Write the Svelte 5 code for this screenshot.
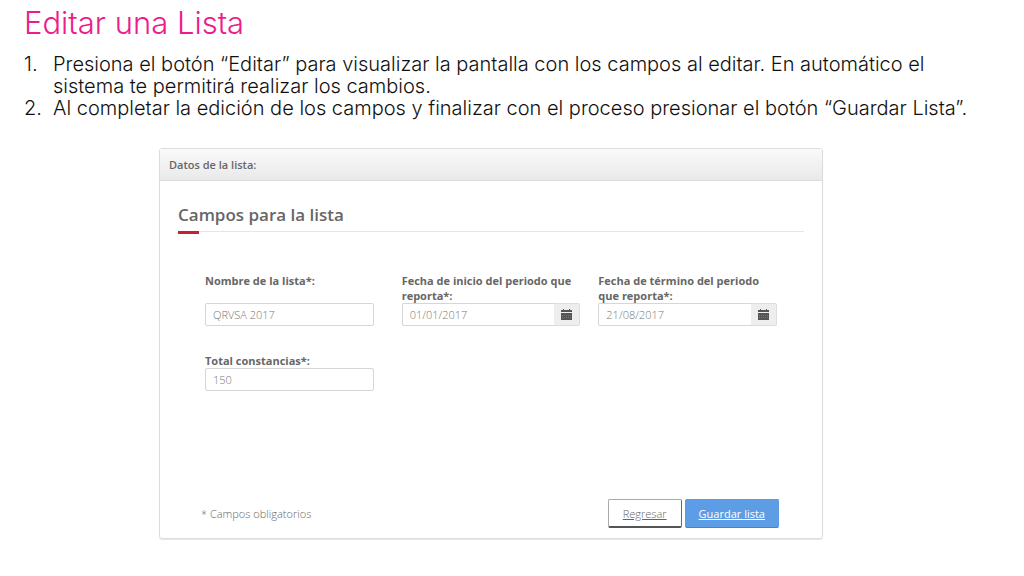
<script>
  let nombre = "QRVSA 2017";
  let inicio = "01/01/2017";
  let termino = "21/08/2017";
  let total = "150";
</script>

<main>
  <h1>Editar una Lista</h1>
  <ol>
    <li>
      Presiona el botón “Editar” para visualizar la pantalla con los campos al
      editar. En automático el sistema te permitirá realizar los cambios.
    </li>
    <li>
      Al completar la edición de los campos y finalizar con el proceso presionar
      el botón “Guardar Lista”.
    </li>
  </ol>

  <section class="panel">
    <header>Datos de la lista:</header>
    <form on:submit|preventDefault>
      <h2>Campos para la lista</h2>
      <div class="campos">
        <div class="campo">
          <label for="nombre">Nombre de la lista*:</label>
          <input id="nombre" bind:value={nombre} />
        </div>
        <div class="campo fecha">
          <label for="inicio">Fecha de inicio del periodo que reporta*:</label>
          <div class="grupo">
            <input id="inicio" bind:value={inicio} />
            <button type="button" aria-label="Elegir fecha de inicio">
              <svg viewBox="0 0 11 11" width="11" height="11">
                <path d="M0 1h2V0h1v1h5V0h1v1h2v2H0z M0 4h11v7H0z" />
                <path class="raya" d="M1 6.5h9M1 8.5h9" />
              </svg>
            </button>
          </div>
        </div>
        <div class="campo fecha">
          <label for="termino">Fecha de término del periodo que reporta*:</label>
          <div class="grupo">
            <input id="termino" bind:value={termino} />
            <button type="button" aria-label="Elegir fecha de término">
              <svg viewBox="0 0 11 11" width="11" height="11">
                <path d="M0 1h2V0h1v1h5V0h1v1h2v2H0z M0 4h11v7H0z" />
                <path class="raya" d="M1 6.5h9M1 8.5h9" />
              </svg>
            </button>
          </div>
        </div>
        <div class="campo">
          <label for="total">Total constancias*:</label>
          <input id="total" bind:value={total} />
        </div>
      </div>
      <footer>
        <span>* Campos obligatorios</span>
        <div class="botones">
          <button type="button" class="regresar">Regresar</button>
          <button type="submit" class="guardar">Guardar lista</button>
        </div>
      </footer>
    </form>
  </section>
</main>

<style>
  :global(body) {
    background: #fff;
  }
  main {
    padding: 5px 24px 32px;
    font-family: "Century Gothic", "Inter", sans-serif;
    font-weight: 300;
    color: #111;
  }
  h1 {
    margin: 0;
    font-size: 31px;
    line-height: 36px;
    font-weight: 300;
    color: #ee1c8a;
  }
  ol {
    margin: 12px 0 0;
    padding: 0 24px 0 29px;
    font-size: 20px;
    line-height: 22px;
    list-style: none;
    counter-reset: paso;
  }
  li {
    counter-increment: paso;
  }
  li::before {
    content: counter(paso) ".";
    float: left;
    margin-left: -29px;
  }
  .panel {
    margin: 29px 177px 0 135px;
    border: 1px solid #dcdcdc;
    border-radius: 3px;
    font-family: "Open Sans", sans-serif;
    font-size: 11px;
    color: #666;
    box-shadow: 0 1px 1px #e6e6e6;
  }
  header {
    padding: 0 9px;
    line-height: 31px;
    font-weight: 600;
    background: linear-gradient(#fafafa, #e9e9e9);
    border-bottom: 1px solid #ddd;
  }
  form {
    padding: 20px 18px 10px;
  }
  h2 {
    position: relative;
    margin: 0;
    padding-bottom: 3px;
    font-size: 17px;
    line-height: 27px;
    font-weight: 600;
    border-bottom: 1px solid #e6e6e6;
  }
  h2::after {
    content: "";
    position: absolute;
    left: 0;
    bottom: -3px;
    width: 21px;
    height: 3px;
    background: #c8202f;
  }
  .campos {
    display: grid;
    grid-template-columns: repeat(3, 1fr);
    row-gap: 27px;
    padding: 41px 9px 0 27px;
  }
  .campo {
    display: flex;
    flex-direction: column;
    justify-content: space-between;
    margin-right: 28px;
  }
  .fecha {
    margin-right: 18px;
  }
  label {
    line-height: 15px;
    font-weight: 700;
  }
  input {
    box-sizing: border-box;
    width: 100%;
    min-width: 0;
    height: 23px;
    padding: 0 7px;
    border: 1px solid #d6d6d6;
    border-radius: 2px;
    background: #fff;
    color: #777;
    font: 300 11px "Open Sans", sans-serif;
  }
  .grupo {
    display: flex;
  }
  .grupo input {
    flex: 1;
    border-right: 0;
    border-radius: 2px 0 0 2px;
  }
  .grupo button {
    display: flex;
    align-items: center;
    justify-content: center;
    width: 26px;
    padding: 0;
    border: 1px solid #ddd;
    border-left: 0;
    border-radius: 0 2px 2px 0;
    background: #eee;
  }
  svg {
    fill: #555;
  }
  .raya {
    stroke: #777;
    stroke-dasharray: 1 1;
  }
  footer {
    display: flex;
    justify-content: space-between;
    align-items: center;
    margin-top: 108px;
    padding: 0 25px 0 23px;
    font-weight: 300;
  }
  .botones {
    display: flex;
    gap: 3px;
  }
  .botones button {
    height: 29px;
    padding: 0 14px;
    border-radius: 2px;
    font: 300 11px "Open Sans", sans-serif;
    text-decoration: underline;
  }
  .regresar {
    border: 1px solid #aaa;
    border-right-color: #666;
    border-bottom: 2px solid #555;
    background: #fff;
    color: #666;
  }
  .botones .guardar {
    border: 1px solid #5a9ae3;
    border-bottom-color: #4482cc;
    background: #5d9de6;
    color: #fff;
    font-weight: 400;
    padding: 0 13px;
  }
</style>
